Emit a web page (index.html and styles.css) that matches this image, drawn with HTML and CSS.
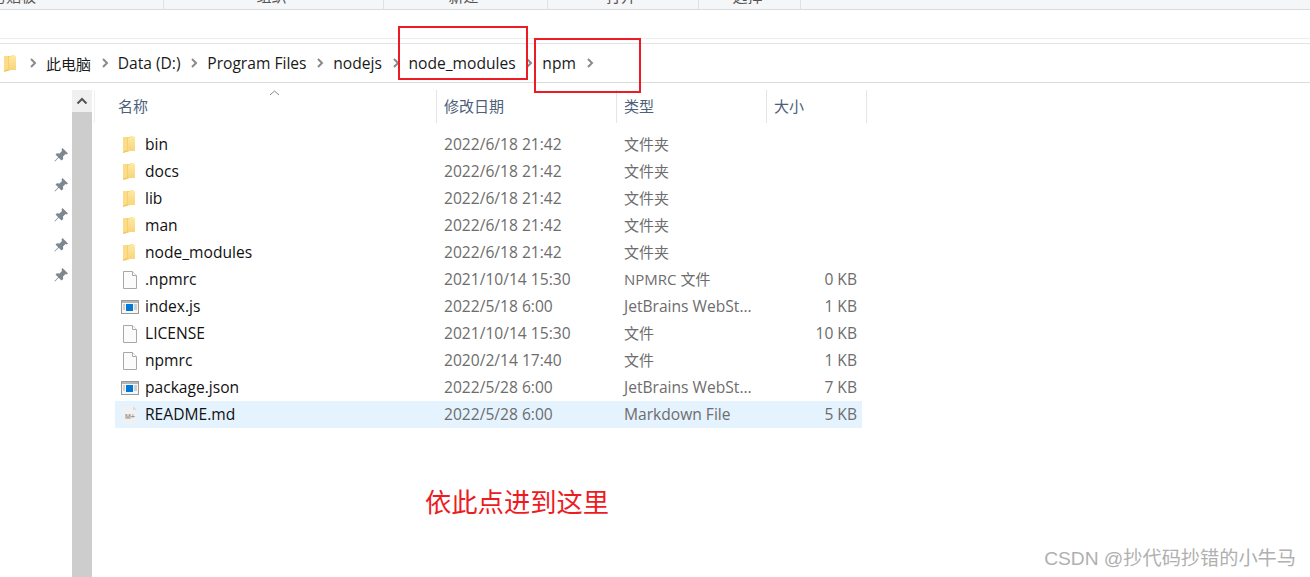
FILE: index.html
```html
<!DOCTYPE html>
<html lang="zh-CN">
<head>
    <meta charset="UTF-8">
    <title>npm</title>
    <link rel="stylesheet" href="styles.css">
</head>
<body>
    <svg class="icon-defs" width="0" height="0">
        <defs>
            <linearGradient id="folderFill" x1="0" y1="0" x2="0" y2="1">
                <stop offset="0" stop-color="#ffe9a3"/>
                <stop offset="1" stop-color="#f7d67c"/>
            </linearGradient>
            <symbol id="folder" viewBox="0 0 12 17">
                <path d="M0 1h7v14l-7 2z" fill="#f3c44f"/>
                <path d="M5 1.500h2V0h3l2 1.500V15H2l3-1z" fill="url(#folderFill)"/>
                <path d="M0 1h4.500v12.500L0 16z" fill="#fbdc8a"/>
            </symbol>
            <symbol id="chevron" viewBox="0 0 8 12">
                <path d="M2 2l4 4-4 4" fill="none" stroke="#8a8a8a" stroke-width="2"/>
            </symbol>
            <symbol id="pin" viewBox="0 0 14 14">
                <path d="M8.500 0l5.500 5.500-1.500 1-1-.5-2.500 2.500.2 2.500L7.500 12.500 4.700 9.800 1 13.500 .5 13 4.200 9.300 1.500 6.500 3 5.200l2.500.2L8 3l-.5-1.500z" fill="#7d8790"/>
            </symbol>
            <symbol id="file" viewBox="0 0 14 18">
                <path d="M.5.500h9l4 4v13H.500z" fill="#fbfbfb" stroke="#a8a8a8"/>
                <path d="M9.500.500v4h4" fill="#fff" stroke="#a8a8a8"/>
            </symbol>
            <symbol id="app" viewBox="0 0 18 14">
                <rect x=".5" y=".5" width="17" height="13" fill="#f6f6f6" stroke="#999"/>
                <rect x="1" y="1" width="16" height="2" fill="#b5b5b5"/>
                <rect x="5" y="4" width="7" height="7" fill="#0078d7"/>
                <path d="M2 5h2M2 7h2M2 9h2M13 5h3M13 7h3M13 9h3" stroke="#aaa"/>
            </symbol>
            <symbol id="md" viewBox="0 0 14 18">
                <path d="M0 0h10l4 4v14H0z" fill="#f1f1f1"/>
                <path d="M10 0v4h4z" fill="#dcdcdc"/>
                <text x="7" y="13" text-anchor="middle" class="md-mark">M+</text>
            </symbol>
        </defs>
    </svg>

    <div class="ribbon">
        <div class="ribbon-group group-clip"><span>剪贴板</span></div>
        <div class="ribbon-group group-org"><span>组织</span></div>
        <div class="ribbon-group group-new"><span>新建</span></div>
        <div class="ribbon-group group-open"><span>打开</span></div>
        <div class="ribbon-group group-select"><span>选择</span></div>
    </div>

    <div class="toolbar-gap"></div>

    <div class="address-bar">
        <svg class="address-folder"><use href="#folder"/></svg>
        <svg class="chevron"><use href="#chevron"/></svg>
        <span class="crumb cjk">此电脑</span>
        <svg class="chevron"><use href="#chevron"/></svg>
        <span class="crumb">Data (D:)</span>
        <svg class="chevron"><use href="#chevron"/></svg>
        <span class="crumb">Program Files</span>
        <svg class="chevron"><use href="#chevron"/></svg>
        <span class="crumb">nodejs</span>
        <svg class="chevron"><use href="#chevron"/></svg>
        <span class="crumb">node_modules</span>
        <svg class="chevron"><use href="#chevron"/></svg>
        <span class="crumb">npm</span>
        <svg class="chevron"><use href="#chevron"/></svg>
    </div>

    <div class="explorer">
        <div class="nav-pane">
            <svg class="pin"><use href="#pin"/></svg>
            <svg class="pin"><use href="#pin"/></svg>
            <svg class="pin"><use href="#pin"/></svg>
            <svg class="pin"><use href="#pin"/></svg>
            <svg class="pin"><use href="#pin"/></svg>
        </div>
        <div class="scrollbar">
            <div class="scroll-up">
                <svg width="12" height="8" viewBox="0 0 12 8"><path d="M1.500 6.500L6 2l4.500 4.500" fill="none" stroke="#555" stroke-width="2"/></svg>
            </div>
            <div class="scroll-thumb"></div>
        </div>
        <div class="file-pane">
            <div class="col-header">
                <div class="col col-name">名称<svg class="sort-arrow" width="11" height="6" viewBox="0 0 11 6"><path d="M1 5l4.500-4L10 5" fill="none" stroke="#8a8a8a"/></svg></div>
                <div class="col col-date">修改日期</div>
                <div class="col col-type">类型</div>
                <div class="col col-size">大小</div>
            </div>
            <div class="file-list">
                <div class="file-row">
                    <div class="file-name"><svg class="ico-folder"><use href="#folder"/></svg>bin</div>
                    <div class="file-date">2022/6/18 21:42</div>
                    <div class="file-type cjk">文件夹</div>
                    <div class="file-size"></div>
                </div>
                <div class="file-row">
                    <div class="file-name"><svg class="ico-folder"><use href="#folder"/></svg>docs</div>
                    <div class="file-date">2022/6/18 21:42</div>
                    <div class="file-type cjk">文件夹</div>
                    <div class="file-size"></div>
                </div>
                <div class="file-row">
                    <div class="file-name"><svg class="ico-folder"><use href="#folder"/></svg>lib</div>
                    <div class="file-date">2022/6/18 21:42</div>
                    <div class="file-type cjk">文件夹</div>
                    <div class="file-size"></div>
                </div>
                <div class="file-row">
                    <div class="file-name"><svg class="ico-folder"><use href="#folder"/></svg>man</div>
                    <div class="file-date">2022/6/18 21:42</div>
                    <div class="file-type cjk">文件夹</div>
                    <div class="file-size"></div>
                </div>
                <div class="file-row">
                    <div class="file-name"><svg class="ico-folder"><use href="#folder"/></svg>node_modules</div>
                    <div class="file-date">2022/6/18 21:42</div>
                    <div class="file-type cjk">文件夹</div>
                    <div class="file-size"></div>
                </div>
                <div class="file-row">
                    <div class="file-name"><svg class="ico-file"><use href="#file"/></svg>.npmrc</div>
                    <div class="file-date">2021/10/14 15:30</div>
                    <div class="file-type cjk">NPMRC 文件</div>
                    <div class="file-size">0 KB</div>
                </div>
                <div class="file-row">
                    <div class="file-name"><svg class="ico-app"><use href="#app"/></svg>index.js</div>
                    <div class="file-date">2022/5/18 6:00</div>
                    <div class="file-type">JetBrains WebSt...</div>
                    <div class="file-size">1 KB</div>
                </div>
                <div class="file-row">
                    <div class="file-name"><svg class="ico-file"><use href="#file"/></svg>LICENSE</div>
                    <div class="file-date">2021/10/14 15:30</div>
                    <div class="file-type cjk">文件</div>
                    <div class="file-size">10 KB</div>
                </div>
                <div class="file-row">
                    <div class="file-name"><svg class="ico-file"><use href="#file"/></svg>npmrc</div>
                    <div class="file-date">2020/2/14 17:40</div>
                    <div class="file-type cjk">文件</div>
                    <div class="file-size">1 KB</div>
                </div>
                <div class="file-row">
                    <div class="file-name"><svg class="ico-app"><use href="#app"/></svg>package.json</div>
                    <div class="file-date">2022/5/28 6:00</div>
                    <div class="file-type">JetBrains WebSt...</div>
                    <div class="file-size">7 KB</div>
                </div>
                <div class="file-row selected">
                    <div class="file-name"><svg class="ico-file"><use href="#md"/></svg>README.md</div>
                    <div class="file-date">2022/5/28 6:00</div>
                    <div class="file-type">Markdown File</div>
                    <div class="file-size">5 KB</div>
                </div>
            </div>
        </div>
    </div>

    <!-- annotations drawn over the screenshot -->
    <div class="mark mark-modules"></div>
    <div class="mark mark-npm"></div>
    <div class="note">依此点进到这里</div>
    <div class="watermark">CSDN @抄代码抄错的小牛马</div>
</body>
</html>
```

FILE: styles.css
```css
* {
    box-sizing: border-box;
}
html, body {
    height: 100%;
}
body {
    position: relative;
    margin: 0;
    overflow: hidden;
    background-color: #fff;
    color: #1a1a1a;
    font-family: "Open Sans", "Noto Sans CJK SC", sans-serif;
    font-size: 15.6px;
}
.icon-defs {
    position: absolute;
}
.md-mark {
    font-family: "Liberation Sans", sans-serif;
    font-size: 7px;
    font-weight: bold;
    fill: #9a9a9a;
}

/* ribbon, only its bottom edge is visible */
.ribbon {
    display: flex;
    height: 10px;
    background-color: #f5f6f7;
    border-bottom: 1px solid #dadbdc;
    overflow: hidden;
}
.ribbon-group {
    display: flex;
    justify-content: center;
    height: 9px;
    border-right: 1px solid #e1e2e3;
    color: #555;
    font-size: 15px;
    line-height: 1;
}
.ribbon-group span {
    flex-shrink: 0;
    margin-top: -11px;
}
.group-clip { width: 164px; padding-right: 127px; justify-content: flex-end; }
.group-org { width: 220px; padding-right: 4px; }
.group-new { width: 164px; padding-right: 4px; }
.group-open { width: 151px; padding-right: 4px; }
.group-select { width: 102px; padding-right: 4px; }

.toolbar-gap {
    height: 34px;
    border-bottom: 1px solid #e3e3e3;
    background: linear-gradient(#fff 28px, #ececec 28px, #ececec 29px, #fff 29px);
}

.address-bar {
    display: flex;
    align-items: center;
    height: 39px;
    padding-left: 4px;
    border-bottom: 1px solid #dcdcdc;
}
.address-folder {
    width: 12px;
    height: 17px;
    margin-right: 13px;
}
.chevron {
    width: 8px;
    height: 12px;
    margin-right: 9px;
}
.crumb {
    margin-right: 9.7px;
}
.file-row .cjk,
.crumb.cjk {
    font-size: 15px;
}

.explorer {
    display: flex;
    height: 494px;
}
.nav-pane {
    display: flex;
    flex-direction: column;
    align-items: flex-end;
    gap: 16px;
    width: 72px;
    padding: 65px 4px 0 0;
}
.pin {
    width: 14px;
    height: 14px;
}
.scrollbar {
    width: 20px;
    margin-top: 7px;
    display: flex;
    flex-direction: column;
}
.scroll-up {
    display: flex;
    align-items: center;
    justify-content: center;
    height: 22px;
    background-color: #f0f0f0;
}
.scroll-thumb {
    flex: 1;
    background-color: #cdcdcd;
}

.file-pane {
    flex: 1;
    margin-left: 2px;
    padding-top: 7px;
}
.col-header {
    display: grid;
    grid-template-columns: 343px 180px 150px 100px;
    height: 32px;
    margin-bottom: 9px;
}
.col {
    position: relative;
    padding-left: 7px;
    border-right: 1px solid #e5e5e5;
    color: #4c607a;
    font-size: 15px;
    line-height: 33px;
}
.col-name {
    padding-left: 23px;
    border-left: 1px solid #f0f0f0;
}
.sort-arrow {
    position: absolute;
    left: 174px;
    top: 0;
}

.file-list {
    margin-left: 21px;
    width: 747px;
}
.file-row {
    display: grid;
    grid-template-columns: 322px 180px 150px 90px;
    height: 27px;
    line-height: 27px;
    color: #6d6d6d;
    white-space: nowrap;
}
.file-row.selected {
    background-color: #e5f3ff;
}
.file-name {
    display: flex;
    align-items: center;
    color: #111;
}
.ico-folder {
    width: 12px;
    height: 17px;
    margin: 0 10px 0 8px;
}
.ico-file {
    width: 14px;
    height: 18px;
    margin: 0 8px;
}
.ico-app {
    width: 18px;
    height: 14px;
    margin: 0 6px;
}
.file-date {
    padding-left: 7px;
}
.file-type {
    padding-left: 7px;
}
.file-size {
    text-align: right;
}

/* red boxes and notes added on top of the screenshot */
.mark {
    position: absolute;
    border: 2px solid #ed1c24;
}
.mark-modules {
    left: 398px;
    top: 26px;
    width: 130px;
    height: 54px;
}
.mark-npm {
    left: 534px;
    top: 38px;
    width: 107px;
    height: 55px;
}
.note {
    position: absolute;
    left: 425px;
    top: 484px;
    color: #ed1c24;
    font-family: "Noto Sans CJK SC", sans-serif;
    font-size: 26.3px;
    line-height: 34px;
}
.watermark {
    position: absolute;
    right: 14px;
    top: 545px;
    color: #b0b0b0;
    font-family: "Liberation Sans", "Noto Sans CJK SC", sans-serif;
    font-size: 19.2px;
    line-height: 28px;
    white-space: nowrap;
}
```
